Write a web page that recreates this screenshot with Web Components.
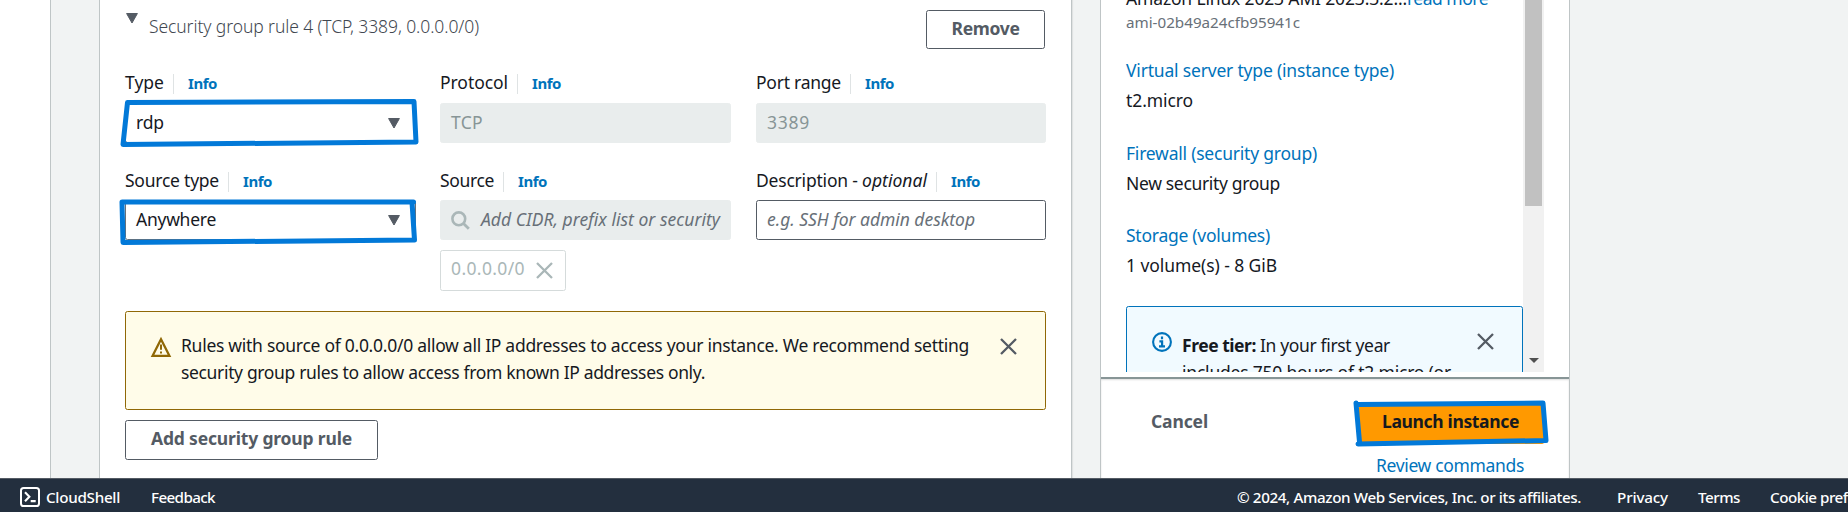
<!DOCTYPE html>
<html lang="en"><head><meta charset="utf-8"><title>Launch an instance</title>
<style>
html,body{margin:0;height:512px;overflow:hidden;background:#f1f3f3}
body{font-family:"Noto Sans","Open Sans",sans-serif;font-size:17.5px;color:#16191f}
</style></head><body>
<launch-page></launch-page>
<script>
const define=(name,html,setup)=>customElements.define(name,class extends HTMLElement{
  connectedCallback(){
    if(this.shadowRoot)return;
    const t=document.createElement('template');
    t.innerHTML=html;
    this.attachShadow({mode:'open'}).append(t.content.cloneNode(true));
    if(setup)setup(this,this.shadowRoot);
  }
});

/* One line of text whose tracking is set so that it takes up the width given in "w". */
define('fit-text',`<style>
:host{display:block;white-space:pre;line-height:24px;height:24px;width:max-content}
:host([link]){color:#0073bb}
:host([bold]){font-weight:700}
:host([light]){font-weight:300}
:host([italic]){font-style:italic}
:host([small]){font-size:15.2px}
span{display:inline-block}
</style><span><slot></slot></span>`,(el,root)=>{
  const w=parseFloat(el.getAttribute('w')),s=root.querySelector('span');
  if(!w)return;
  const n=el.textContent.length;
  s.style.letterSpacing=((w-s.getBoundingClientRect().width)/n)+'px';
});

define('ui-icon',`<style>:host{display:block;line-height:0}svg{display:block;overflow:visible;fill:none;stroke:currentColor}</style>`,(el,root)=>{
  const I={
    caret:['0 0 12 11','<path d="M.6.5h10.8L6 10z" fill="currentColor" stroke-linejoin="round"/>',12,11],
    close:['0 0 17 17','<path d="M1 1l15 15M16 1L1 16" stroke-width="2.3"/>',17,17],
    search:['0 0 19 19','<circle cx="7.8" cy="7.8" r="6.4" stroke-width="2.6"/><path d="M12.5 12.5l5.3 5.3" stroke-width="2.8"/>',19,19],
    warn:['0 0 20 20','<path d="M10 2.3L1.6 18.8h16.8z" stroke-width="2.3" stroke-linejoin="miter"/><path d="M10 7.6v5.2M10 14.4v2.2" stroke-width="2"/>',20,20],
    info:['0 0 20 20','<circle cx="10" cy="10" r="8.9" stroke-width="2.1"/><path d="M10 4.6v2.6M7.4 9.3h2.7v4.9M7 14.3h6" stroke-width="2.2"/>',20,20],
    shell:['0 0 20 20','<rect x="1" y="1" width="18" height="18" rx="2.6" stroke-width="2"/><path d="M5 5.2l4.4 4.5L5 14.3M10.7 14.1h5" stroke-width="2.1"/>',20,20]
  }[el.getAttribute('name')];
  root.innerHTML+=`<svg viewBox="${I[0]}" width="${I[2]}" height="${I[3]}">${I[1]}</svg>`;
});

/* Freehand marker outline laid over the control inside it. */
define('marker-frame',`<style>:host{display:block;position:relative}svg{position:absolute;left:0;top:0;width:1px;height:1px;overflow:visible;fill:none;stroke:#0279d8;stroke-width:5;stroke-linecap:round;stroke-linejoin:round;pointer-events:none}</style><slot></slot><svg><path/></svg>`,
 (el,root)=>root.querySelector('path').setAttribute('d',el.getAttribute('path')));

define('field-label',`<style>
:host{display:flex;height:24px}
i{width:1px;height:20px;background:#dfe3e4;margin:4px 14px 0 9px}
</style><slot></slot><i></i><fit-text link bold small style="font-size:15px;margin-top:1px" w="29">Info</fit-text>`);

define('ui-box',`<style>
:host{display:flex;box-sizing:border-box;height:40px;border:1px solid #545b64;border-radius:2.5px;background:#fff;padding:6px 10px 0 10px;width:291px}
:host([disabled]){background:#e9eded;border-color:#e9eded;color:#879596}
</style><slot></slot>`);

define('ui-select',`<style>
:host{display:flex;box-sizing:border-box;height:40px;width:291px;border:1px solid #687078;border-radius:2.5px;padding:6px 15px 0 10px;justify-content:space-between;background:#fff}
ui-icon{color:#545b64;margin-top:8px}
</style><slot></slot><ui-icon name="caret"></ui-icon>`);

define('ui-button',`<style>
:host{display:flex;box-sizing:border-box;border:1px solid #545b64;border-radius:2.5px;color:#545b64;background:#fff;justify-content:center;height:40px;padding-top:5px}
</style><slot></slot>`);

define('rule-form',`<style>
:host{display:block;width:921px;padding:0 25px;height:478px;box-sizing:content-box;background:#fff;border:solid #bfc5c6;border-width:0 1px;box-shadow:1px 0 1px #0001}
.head{display:flex;height:70px}
.head>ui-icon{margin:13px 11px 0 1px;color:#545b64}
.head>fit-text{margin-top:14px;color:#414750}
.head ui-button{margin:10px 1px 0 auto;width:119px;height:39px}
.row{display:grid;grid-template-columns:315px 316px 290px}
.row ui-box,.row marker-frame{margin-top:9px}
.two{padding-top:25px}.two ui-box,.two marker-frame{margin-top:8px}
.last{width:290px}
.search ui-icon{color:#aab7b8;margin:4px 11px 0 0}
.search fit-text{color:#687078}
.token{display:flex;box-sizing:border-box;width:126px;height:41px;margin-top:10px;border:1px solid #d5dbdb;border-radius:2.5px;color:#aab7b8;padding:5px 12px 0 10px}
.token ui-icon{margin:6px 0 0 auto}
.alert{display:flex;box-sizing:border-box;height:99px;margin-top:20px;border:1px solid #906806;border-radius:2.5px;background:#fffce9;padding:21px 28px 0 25px}
.alert>ui-icon:first-child{color:#906806;margin:4px 10px 0 0}
.alert fit-text+fit-text{margin-top:3px}
.alert>ui-icon:last-child{margin:5px 0 0 auto;color:#545b64}
.add{width:253px;margin-top:10px}
</style>
<div class="head"><ui-icon name="caret"></ui-icon><fit-text light w="330">Security group rule 4 (TCP, 3389, 0.0.0.0/0)</fit-text><ui-button><fit-text bold w="68">Remove</fit-text></ui-button></div>
<div class="row">
 <div><field-label><fit-text w="39">Type</fit-text></field-label>
 <marker-frame path="M2.5 -.5L289 -1.5L291 39L-2 41.500Z"><ui-select><fit-text w="28">rdp</fit-text></ui-select></marker-frame></div>
 <div><field-label><fit-text w="68">Protocol</fit-text></field-label><ui-box disabled><fit-text w="32">TCP</fit-text></ui-box></div>
 <div><field-label><fit-text w="85">Port range</fit-text></field-label><ui-box class="last" disabled><fit-text w="43">3389</fit-text></ui-box></div>
</div>
<div class="row two">
 <div><field-label><fit-text w="94">Source type</fit-text></field-label>
 <marker-frame path="M-3 2L288.500 2M287 2L289.500 40L-2 42.500M-3 2L-2 42"><ui-select><fit-text w="80">Anywhere</fit-text></ui-select></marker-frame></div>
 <div><field-label><fit-text w="54">Source</fit-text></field-label><ui-box class="search" disabled><ui-icon name="search"></ui-icon><fit-text italic w="239">Add CIDR, prefix list or security</fit-text></ui-box>
 <div class="token"><fit-text w="74">0.0.0.0/0</fit-text><ui-icon name="close"></ui-icon></div></div>
 <div><field-label><fit-text w="106">Description - </fit-text><fit-text italic w="65">optional</fit-text></field-label><ui-box class="last"><fit-text italic style="color:#687078" w="208">e.g. SSH for admin desktop</fit-text></ui-box></div>
</div>
<div class="alert"><ui-icon name="warn"></ui-icon><div><fit-text w="788">Rules with source of 0.0.0.0/0 allow all IP addresses to access your instance. We recommend setting</fit-text><fit-text w="524">security group rules to allow access from known IP addresses only.</fit-text></div><ui-icon name="close"></ui-icon></div>
<ui-button class="add"><fit-text bold w="201">Add security group rule</fit-text></ui-button>`);

define('summary-panel',`<style>
:host{display:block;width:468px;height:478px;background:#fff;border:solid #bfc5c6;border-width:0 1px}
.scroll{display:flex;height:372px;padding-left:25px;overflow:hidden}
.list{width:397px;flex:none}
.list>*{display:flex}
.bar{width:21px;background:#f1f1f1;display:flex;flex-direction:column;align-items:center;flex:none}
.thumb{width:17px;height:206px;background:#c1c1c1}
.arrow{margin-top:152px;border:5px solid transparent;border-top-color:#505050;border-bottom:0}
.free{box-sizing:border-box;height:140px;border:1px solid #0073bb;border-radius:2.5px;background:#f1faff;padding:25px 28px 0 25px}
.free>ui-icon:first-child{color:#0073bb;margin-right:10px}
.free>ui-icon:last-child{color:#545b64;margin:1px 0 0 auto}
.line{display:flex;margin-top:1px}.line+.line{margin-top:3px}
.foot{border-top:2px solid #879596;margin-top:5px;box-shadow:inset 0 1px 2px #0002;height:99px}
.actions{display:flex;justify-content:space-between;padding:25px 25px 0 50px}
.actions>fit-text{margin-top:5px;color:#545b64}
.launch{width:185px;height:40px;background:#f90;border-radius:2px;display:flex;justify-content:center;box-sizing:border-box;padding:5px 2px 0 0}
.review{display:flex;justify-content:flex-end;margin:9px 45px 0 0}
</style>
<div class="scroll"><div class="list">
<div style="margin-top:-14px"><fit-text w="281">Amazon Linux 2023 AMI 2023.3.2...</fit-text><fit-text link w="81">read more</fit-text></div>
<fit-text small style="color:#687078;margin-top:0" w="174">ami-02b49a24cfb95941c</fit-text>
<fit-text link style="margin-top:24px" w="268">Virtual server type (instance type)</fit-text>
<fit-text style="margin-top:6px" w="67">t2.micro</fit-text>
<fit-text link style="margin-top:29px" w="191">Firewall (security group)</fit-text>
<fit-text style="margin-top:6px" w="154">New security group</fit-text>
<fit-text link style="margin-top:28px" w="144">Storage (volumes)</fit-text>
<fit-text style="margin-top:6px" w="151">1 volume(s) - 8 GiB</fit-text>
<div class="free" style="margin-top:29px"><ui-icon name="info"></ui-icon><div><div class="line"><fit-text bold w="78">Free tier: </fit-text><fit-text w="130">In your first year</fit-text></div><div class="line"><fit-text w="269">includes 750 hours of t2.micro (or</fit-text></div></div><ui-icon name="close"></ui-icon></div>
</div><div class="bar"><div class="thumb"></div><div class="arrow"></div></div></div>
<div class="foot"><div class="actions"><fit-text bold w="57">Cancel</fit-text>
<marker-frame path="M-2 0.500L184 -1L187 36.500L-1 40M-3 -1L.500 38"><div class="launch"><fit-text bold w="137">Launch instance</fit-text></div></marker-frame></div>
<div class="review"><fit-text link w="148">Review commands</fit-text></div></div>`);

define('console-footer',`<style>
:host{display:flex;box-sizing:border-box;width:1848px;height:34px;background:#232f3e;border-top:1px solid #545b64;color:#fff;padding:6px 0 0 20px;font-size:15.2px;overflow:hidden;font-weight:500}
ui-icon{margin:2px 6px 0 0}
nav{display:flex;flex:none;width:611px;margin-left:auto}
nav *{flex:none}
</style><ui-icon name="shell"></ui-icon><fit-text w="74">CloudShell</fit-text><fit-text style="margin-left:31px" w="64">Feedback</fit-text>
<nav><fit-text w="344">© 2024, Amazon Web Services, Inc. or its affiliates.</fit-text><fit-text style="margin-left:36px" w="51">Privacy</fit-text><fit-text style="margin-left:30px" w="42">Terms</fit-text><fit-text style="margin-left:30px" w="131">Cookie preferences</fit-text></nav>`);

define('launch-page',`<style>
:host{display:block;width:1848px;height:512px;overflow:hidden;background:#f1f3f3}
main{display:flex;height:478px}
.side{width:50px;background:#fff;border-right:1px solid #bfc5c6;flex:none}
rule-form{margin-left:48px;flex:none}
summary-panel{margin-left:28px;flex:none}
</style><main><div class="side"></div><rule-form></rule-form><summary-panel></summary-panel></main><console-footer></console-footer>`);
</script></body></html>
